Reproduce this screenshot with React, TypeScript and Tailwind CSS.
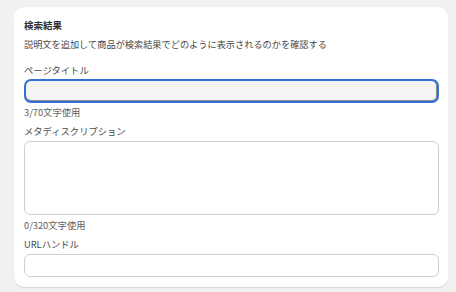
export default function App() {
  return (
    <div
      className="min-h-screen bg-[#f1f1f1] pl-[14px] pr-[8px] pt-[7px] pb-[5px]"
      style={{ fontFamily: '"Noto Sans CJK JP", "Noto Sans", sans-serif' }}
    >
      <div className="bg-white rounded-[10px] shadow-[0_1px_1px_rgba(0,0,0,0.12)] pl-[10px] pr-[9px] pt-[11px] pb-[10px] flex flex-col">
        {/* Heading */}
        <h2 className="text-[9.5px] leading-[14px] font-bold text-[#303030]">検索結果</h2>
        <p className="mt-[5px] text-[9.2px] leading-[14px] text-[#4a4a4a]">
          説明文を追加して商品が検索結果でどのように表示されるのかを確認する
        </p>

        {/* Page title */}
        <label className="mt-[12px] text-[9.3px] leading-[14px] text-[#4a4a4a]">ページタイトル</label>
        <div className="mt-[2px] h-[24px] rounded-[7px] border-2 border-[#2f6fd6] bg-[#f4f4f4] shadow-[inset_0_-1px_0_#8a8a8a,inset_-1px_0_0_#8a8a8a]" />
        <p className="mt-[2px] text-[9.3px] leading-[14px] text-[#616161]">3/70文字使用</p>

        {/* Meta description */}
        <label className="mt-[5px] text-[9.3px] leading-[14px] text-[#4a4a4a]">メタディスクリプション</label>
        <div className="mt-[3px] h-[74px] rounded-[6px] border border-[#cfcfcf] bg-white" />
        <p className="mt-[3px] text-[9.3px] leading-[14px] text-[#616161]">0/320文字使用</p>

        {/* URL handle */}
        <label className="mt-[5px] text-[9.3px] leading-[14px] text-[#4a4a4a]">URLハンドル</label>
        <div className="mt-[3px] h-[23px] rounded-[6px] border border-[#cfcfcf] bg-white" />
      </div>
    </div>
  )
}
